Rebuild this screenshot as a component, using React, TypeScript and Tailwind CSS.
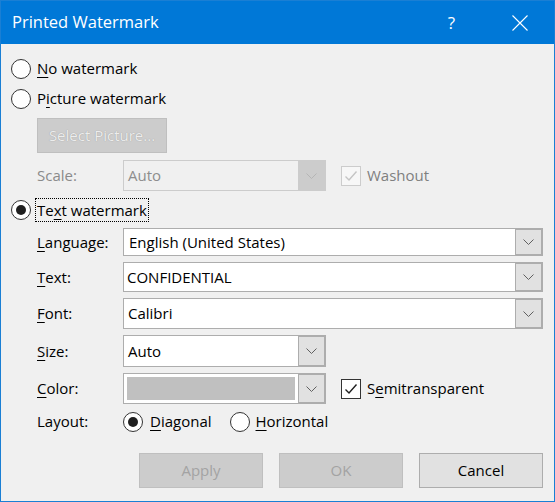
import React from 'react';

const font = "font-['Open_Sans','Noto_Sans',sans-serif]";

function Radio({ checked = false }: { checked?: boolean }) {
  return (
    <span className="w-[20px] h-[20px] shrink-0 rounded-full border border-[#333333] bg-white flex items-center justify-center">
      {checked && <span className="w-[10px] h-[10px] rounded-full bg-[#1f1f1f]" />}
    </span>
  );
}

function Check({ disabled = false }: { disabled?: boolean }) {
  return (
    <span
      className={`w-[20px] h-[20px] shrink-0 border flex items-center justify-center ${
        disabled ? 'border-[#cccccc] bg-[#f7f7f7]' : 'border-[#333333] bg-white'
      }`}
    >
      <svg width="14" height="12" viewBox="0 0 14 12">
        <path
          d="M1.5 6.5 L5 10 L12.5 1.5"
          fill="none"
          stroke={disabled ? '#c4c4c4' : '#1f1f1f'}
          strokeWidth="1.4"
        />
      </svg>
    </span>
  );
}

function Chevron({ color = '#606060' }: { color?: string }) {
  return (
    <svg width="11" height="6" viewBox="0 0 11 6">
      <path d="M0.5 0.5 L5.5 5.5 L10.5 0.5" fill="none" stroke={color} strokeWidth="1" />
    </svg>
  );
}

// underline the access key letter
function Key({ children }: { children: React.ReactNode }) {
  return <span className="underline underline-offset-[3px] decoration-1">{children}</span>;
}

function Combo({
  value,
  className = '',
  disabled = false,
  swatch = false,
  pad = 'pl-[4px]',
}: {
  value?: string;
  className?: string;
  disabled?: boolean;
  swatch?: boolean;
  pad?: string;
}) {
  return (
    <div
      className={`flex border ${disabled ? 'border-[#cccccc] bg-[#f0f0f0]' : 'border-[#adadad] bg-white'} ${className}`}
    >
      <div className={`flex-1 flex items-center ${swatch ? 'p-[3px]' : pad}`}>
        {swatch ? (
          <div className="w-full h-full bg-[#c0c0c0]" />
        ) : (
          <span className={disabled ? 'text-[#8d8d8d]' : 'text-black'}>{value}</span>
        )}
      </div>
      <div
        className={`w-[27px] border flex items-center justify-center ${
          disabled ? 'border-[#cccccc] bg-[#cccccc]' : 'border-[#adadad] bg-[#e1e1e1]'
        }`}
      >
        <Chevron color={disabled ? '#b5b5b5' : '#606060'} />
      </div>
    </div>
  );
}

function Label({ children, gray = false }: { children: React.ReactNode; gray?: boolean }) {
  return (
    <span className={`w-[86px] shrink-0 ${gray ? 'text-[#8a8a8a]' : 'text-black'}`}>{children}</span>
  );
}

export default function App() {
  return (
    <div
      className={`w-[555px] h-[502px] border border-[#1a7fd4] bg-[#f0f0f0] flex flex-col text-[15px] leading-none ${font}`}
    >
      {/* Title bar */}
      <div className="h-[43px] shrink-0 bg-[#0078d7] flex items-center text-white">
        <span className="pl-[11px] text-[16.5px]">Printed Watermark</span>
        <span className="ml-auto text-[17px] mr-[57px]">?</span>
        <svg className="mr-[26px]" width="16" height="16" viewBox="0 0 16 16">
          <path d="M0.5 0.5 L15.5 15.5 M15.5 0.5 L0.5 15.5" stroke="white" strokeWidth="1.1" />
        </svg>
      </div>

      {/* Body */}
      <div className="flex flex-col pl-[10px] pr-[11px]">
        <div className="mt-[14px] h-[21px] flex items-center gap-[6px]">
          <Radio />
          <span>
            <Key>N</Key>o watermark
          </span>
        </div>
        <div className="mt-[9px] h-[21px] flex items-center gap-[6px]">
          <Radio />
          <span>
            P<Key>i</Key>cture watermark
          </span>
        </div>

        <button className="mt-[9px] ml-[26px] w-[130px] h-[35px] bg-[#cccccc] border border-[#bfbfbf] text-[#ededed] [text-shadow:0_0_1px_#8f8f8f]">
          Select Picture...
        </button>

        <div className="mt-[7px] h-[31px] flex items-center pl-[26px]">
          <Label gray>Scale:</Label>
          <Combo value="Auto" disabled className="w-[203px] h-full" />
          <span className="ml-[15px] flex items-center gap-[6px] text-[#7f7f7f]">
            <Check disabled />
            Washout
          </span>
        </div>

        <div className="mt-[7px] h-[24px] flex items-center gap-[4px]">
          <Radio checked />
          <span className="border border-dotted border-black h-full flex items-center px-[1px]">
            Te<Key>x</Key>t watermark
          </span>
        </div>

        <div className="mt-[6px] h-[28px] flex items-center pl-[26px]">
          <Label>
            <Key>L</Key>anguage:
          </Label>
          <Combo value="English (United States)" pad="pl-[5px]" className="flex-1 h-full" />
        </div>
        <div className="mt-[6px] h-[30px] flex items-center pl-[26px]">
          <Label>
            <Key>T</Key>ext:
          </Label>
          <Combo value="CONFIDENTIAL" pad="pl-[3px]" className="flex-1 h-full" />
        </div>
        <div className="mt-[6px] h-[31px] flex items-center pl-[26px]">
          <Label>
            <Key>F</Key>ont:
          </Label>
          <Combo value="Calibri" className="flex-1 h-full" />
        </div>
        <div className="mt-[6px] h-[32px] flex items-center pl-[26px]">
          <Label>
            <Key>S</Key>ize:
          </Label>
          <Combo value="Auto" className="w-[203px] h-full" />
        </div>
        <div className="mt-[6px] h-[31px] flex items-center pl-[26px]">
          <Label>
            <Key>C</Key>olor:
          </Label>
          <Combo swatch className="w-[203px] h-full" />
          <span className="ml-[15px] flex items-center gap-[6px]">
            <Check />
            <span>
              S<Key>e</Key>mitransparent
            </span>
          </span>
        </div>

        <div className="mt-[7px] h-[21px] flex items-center pl-[26px]">
          <Label>Layout:</Label>
          <span className="flex items-center gap-[7px]">
            <Radio checked />
            <span>
              <Key>D</Key>iagonal
            </span>
          </span>
          <span className="ml-[18px] flex items-center gap-[6px]">
            <Radio />
            <span>
              <Key>H</Key>orizontal
            </span>
          </span>
        </div>

        <div className="mt-[21px] flex justify-end gap-[16px]">
          <button className="w-[124px] h-[35px] bg-[#cccccc] border border-[#bfbfbf] text-[#a3a3a3]">
            Apply
          </button>
          <button className="w-[124px] h-[35px] bg-[#cccccc] border border-[#bfbfbf] text-[#a3a3a3]">
            OK
          </button>
          <button className="w-[124px] h-[35px] bg-[#e1e1e1] border border-[#adadad] text-black">
            Cancel
          </button>
        </div>
      </div>
    </div>
  );
}
